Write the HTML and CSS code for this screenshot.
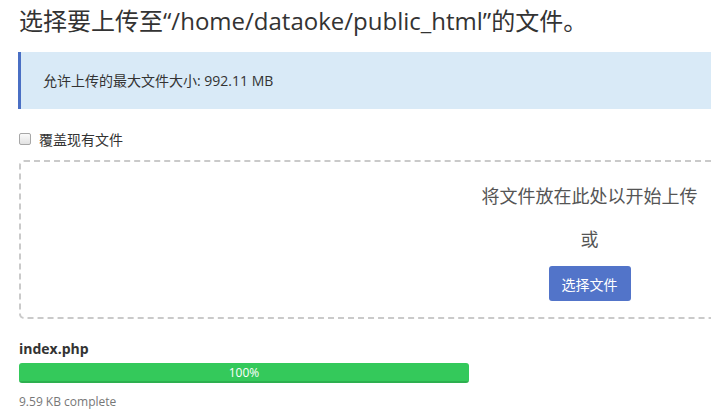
FILE: index.html
```html
<!DOCTYPE html>
<html lang="zh">
<head>
<meta charset="utf-8">
<title>上传</title>
<link rel="stylesheet" href="styles.css">
</head>
<body>
<div class="page">
  <h1 class="title">选择要上传至“/home/dataoke/public_html”的文件。</h1>
  <div class="alert">允许上传的最大文件大小: 992.11 MB</div>
  <label class="overwrite"><input type="checkbox" class="check"><span>覆盖现有文件</span></label>
  <div class="dropzone">
    <div class="drop-text">将文件放在此处以开始上传</div>
    <div class="drop-or">或</div>
    <button class="btn">选择文件</button>
  </div>
  <div class="upload">
    <div class="file-name">index.php</div>
    <div class="bar"><div class="bar-fill" style="width:100%">100%</div></div>
    <div class="file-status">9.59 KB complete</div>
  </div>
</div>
</body>
</html>
```
FILE: styles.css
```css
html, body {
  margin: 0;
  padding: 0;
  overflow: hidden;
  background: #fff;
}
body {
  font-family: "Open Sans", "Noto Sans CJK SC", sans-serif;
  color: #333;
}
.page {
  width: 1142px;
  padding-left: 18px;
}
.title {
  margin: 0;
  padding: 7px 0 0 1px;
  font-size: 24px;
  font-weight: 400;
  line-height: 28px;
  color: #333;
}
.alert {
  margin-top: 17px;
  background: #d9eaf7;
  border-left: 3px solid #4a6fc4;
  padding: 19px 22px;
  font-size: 14px;
  line-height: 19px;
  color: #333;
}
.overwrite {
  display: flex;
  align-items: center;
  margin-top: 20px;
  height: 20px;
  font-size: 14px;
  color: #333;
}
.check {
  appearance: none;
  -webkit-appearance: none;
  width: 12px;
  height: 12px;
  margin: 0 8px 0 1px;
  border: 1px solid #a7a7a7;
  border-radius: 2px;
  background: linear-gradient(#fafafa, #e2e2e2);
}
.dropzone {
  box-sizing: border-box;
  margin-top: 11px;
  margin-left: 1px;
  height: 159px;
  border: 2px dashed #cacaca;
  border-radius: 5px;
  display: flex;
  flex-direction: column;
  align-items: center;
  padding-top: 22px;
}
.drop-text, .drop-or {
  font-size: 18px;
  line-height: 24px;
  color: #555;
}
.drop-or {
  margin-top: 19px;
}
.btn {
  margin-top: 15px;
  width: 82px;
  height: 35px;
  border: 0;
  border-radius: 3px;
  background: #5274c9;
  color: #fff;
  font-family: "Open Sans", "Noto Sans CJK SC", sans-serif;
  font-size: 14px;
  padding: 0;
}
.upload {
  margin-top: 20px;
  margin-left: 1px;
}
.file-name {
  font-weight: 700;
  font-size: 14px;
  line-height: 20px;
  color: #333;
}
.bar {
  margin-top: 4px;
  width: 450px;
  height: 20px;
  border-radius: 3px;
  background: #eee;
  overflow: hidden;
}
.bar-fill {
  height: 100%;
  background: #34c95b;
  box-shadow: inset 0 -2px 0 rgba(0,0,0,0.12);
  color: #fff;
  font-size: 12px;
  line-height: 20px;
  text-align: center;
}
.file-status {
  margin-top: 10px;
  font-size: 12px;
  line-height: 18px;
  color: #777;
}
```
